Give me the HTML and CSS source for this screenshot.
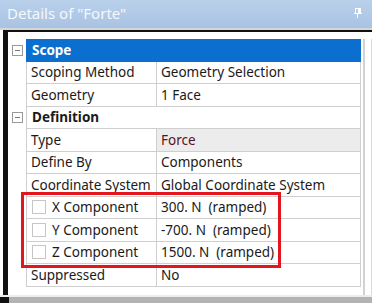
FILE: index.html
```html
<!DOCTYPE html>
<html lang="en">

<head>
    <meta charset="UTF-8">
    <title>Details of "Forte"</title>
    <link rel="stylesheet" href="styles.css">
</head>

<body>
    <div class="panel">
        <div class="titlebar">
            <span class="title">Details of "Forte"</span>
            <svg class="pin" width="8" height="10" viewBox="0 0 8 10">
                <rect x="1.5" y="0.5" width="5" height="5" fill="none" stroke="#fff" />
                <rect x="4" y="1" width="2" height="4" fill="#fff" />
                <rect x="0" y="5" width="8" height="1" fill="#fff" />
                <rect x="3" y="6" width="1" height="4" fill="#fff" />
            </svg>
        </div>
        <div class="sep"></div>

        <div class="frame">
            <div class="grid">
                <div class="row section selected">
                    <div class="gutter"><span class="toggle"></span></div>
                    <div class="head">Scope</div>
                </div>
                <div class="row">
                    <div class="gutter"></div>
                    <div class="name">Scoping Method</div>
                    <div class="value">Geometry Selection</div>
                </div>
                <div class="row">
                    <div class="gutter"></div>
                    <div class="name">Geometry</div>
                    <div class="value">1 Face</div>
                </div>
                <div class="row section">
                    <div class="gutter"><span class="toggle"></span></div>
                    <div class="head">Definition</div>
                </div>
                <div class="row">
                    <div class="gutter"></div>
                    <div class="name">Type</div>
                    <div class="value readonly">Force</div>
                </div>
                <div class="row">
                    <div class="gutter"></div>
                    <div class="name">Define By</div>
                    <div class="value">Components</div>
                </div>
                <div class="row">
                    <div class="gutter"></div>
                    <div class="name">Coordinate System</div>
                    <div class="value">Global Coordinate System</div>
                </div>
                <div class="row">
                    <div class="gutter"></div>
                    <div class="name"><span class="check"></span>X Component</div>
                    <div class="value">300. N&nbsp; (ramped)</div>
                </div>
                <div class="row">
                    <div class="gutter"></div>
                    <div class="name"><span class="check"></span>Y Component</div>
                    <div class="value">-700. N&nbsp; (ramped)</div>
                </div>
                <div class="row">
                    <div class="gutter"></div>
                    <div class="name"><span class="check"></span>Z Component</div>
                    <div class="value">1500. N&nbsp; (ramped)</div>
                </div>
                <div class="row">
                    <div class="gutter"></div>
                    <div class="name">Suppressed</div>
                    <div class="value">No</div>
                </div>
            </div>
            <div class="side"></div>
            <div class="highlight"></div>
        </div>

        <div class="statusbar"><span class="corner"></span></div>
    </div>
</body>

</html>
```

FILE: styles.css
```css
* {
    margin: 0;
    padding: 0;
    box-sizing: border-box;
}

body {
    font-family: "Noto Sans", "Open Sans", sans-serif;
    background-color: #fff;
    color: #1a1a1a;
}

.panel {
    width: 372px;
    height: 303px;
    display: flex;
    flex-direction: column;
    overflow: hidden;
}

/* Title bar */

.titlebar {
    height: 28px;
    background: linear-gradient(#b9d0ea, #a9c3e3);
    display: flex;
    align-items: center;
    justify-content: space-between;
    padding: 0 10px 2px 7px;
}

.title {
    color: #f5f8fc;
    font-size: 15px;
}

.sep {
    height: 2px;
    background-color: #d6d6d6;
}

/* Property grid */

.frame {
    position: relative;
    flex: 1;
    display: flex;
    margin-left: 3px;
    border-left: 5px solid #111;
    border-top: 2px solid #111;
    padding-top: 7px;
}

.grid {
    width: 355px;
    display: flex;
    flex-direction: column;
}

.row {
    height: 22.5px;
    display: grid;
    grid-template-columns: 18px 130px 205px;
    font-size: 13.5px;
}

.gutter {
    display: flex;
    align-items: center;
    justify-content: center;
    padding-left: 1px;
}

.toggle {
    width: 11px;
    height: 11px;
    border: 1px solid #9a9a9a;
    background: linear-gradient(#7a7a7a, #7a7a7a) center / 5px 1px no-repeat;
}

.name,
.value {
    display: flex;
    align-items: center;
    border-bottom: 1px solid #cfcfcf;
    white-space: nowrap;
}

.name {
    border-left: 1px solid #cfcfcf;
    padding-left: 4px;
}

.value {
    border-left: 1px solid #cfcfcf;
    border-right: 1px solid #cfcfcf;
    padding-left: 4px;
}

.value.readonly {
    background-color: #ececec;
    color: #5a1222;
}

.head {
    grid-column: 2 / 4;
    display: flex;
    align-items: center;
    padding-left: 5px;
    font-weight: bold;
    border-left: 1px solid #cfcfcf;
    border-right: 1px solid #cfcfcf;
    border-bottom: 1px solid #cfcfcf;
}

.selected .head {
    background-color: #0b6fd0;
    color: #fff;
    border-color: #0b6fd0;
}

.check {
    width: 14px;
    height: 14px;
    border: 1px solid #c6c6c6;
    background-color: #fff;
    margin-right: 6px;
    margin-left: 1px;
}

.side {
    width: 9px;
    border-left: 2px solid #d2d2d2;
    border-right: 1px solid #dadada;
}

.highlight {
    position: absolute;
    left: 13px;
    top: 160px;
    width: 260px;
    height: 76px;
    border: 3px solid #e3151f;
}

/* Bottom strip */

.statusbar {
    height: 8px;
    background-color: #b3b3b3;
    border-top: 2px solid #ececec;
    display: flex;
}

.corner {
    width: 9px;
    background-color: #111;
}
```
